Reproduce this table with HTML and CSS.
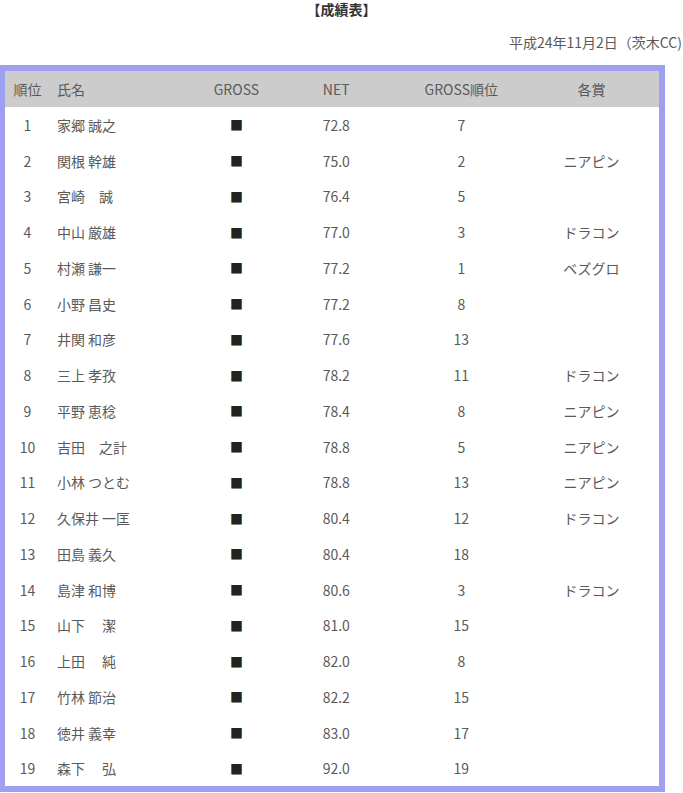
FILE: index.html
```html
<!DOCTYPE html>
<html lang="ja">
<head>
<meta charset="utf-8">
<title>成績表</title>
<link rel="stylesheet" href="styles.css">
</head>
<body>
<h1 class="title">【成績表】</h1>
<p class="date">平成24年11月2日（茨木CC)</p>
<table class="score">
  <colgroup>
    <col class="c-rank"><col class="c-name"><col class="c-gross"><col class="c-net"><col class="c-grank"><col class="c-prize">
  </colgroup>
  <thead>
    <tr><th>順位</th><th class="left">氏名</th><th>GROSS</th><th>NET</th><th>GROSS順位</th><th>各賞</th></tr>
  </thead>
  <tbody>
    <tr><td>1</td><td class="left">家郷 誠之</td><td class="sq">■</td><td>72.8</td><td>7</td><td></td></tr>
    <tr><td>2</td><td class="left">関根 幹雄</td><td class="sq">■</td><td>75.0</td><td>2</td><td>ニアピン</td></tr>
    <tr><td>3</td><td class="left">宮崎　誠</td><td class="sq">■</td><td>76.4</td><td>5</td><td></td></tr>
    <tr><td>4</td><td class="left">中山 厳雄</td><td class="sq">■</td><td>77.0</td><td>3</td><td>ドラコン</td></tr>
    <tr><td>5</td><td class="left">村瀬 謙一</td><td class="sq">■</td><td>77.2</td><td>1</td><td>ベズグロ</td></tr>
    <tr><td>6</td><td class="left">小野 昌史</td><td class="sq">■</td><td>77.2</td><td>8</td><td></td></tr>
    <tr><td>7</td><td class="left">井関 和彦</td><td class="sq">■</td><td>77.6</td><td>13</td><td></td></tr>
    <tr><td>8</td><td class="left">三上 孝孜</td><td class="sq">■</td><td>78.2</td><td>11</td><td>ドラコン</td></tr>
    <tr><td>9</td><td class="left">平野 恵稔</td><td class="sq">■</td><td>78.4</td><td>8</td><td>ニアピン</td></tr>
    <tr><td>10</td><td class="left">吉田　之計</td><td class="sq">■</td><td>78.8</td><td>5</td><td>ニアピン</td></tr>
    <tr><td>11</td><td class="left">小林 つとむ</td><td class="sq">■</td><td>78.8</td><td>13</td><td>ニアピン</td></tr>
    <tr><td>12</td><td class="left">久保井 一匡</td><td class="sq">■</td><td>80.4</td><td>12</td><td>ドラコン</td></tr>
    <tr><td>13</td><td class="left">田島 義久</td><td class="sq">■</td><td>80.4</td><td>18</td><td></td></tr>
    <tr><td>14</td><td class="left">島津 和博</td><td class="sq">■</td><td>80.6</td><td>3</td><td>ドラコン</td></tr>
    <tr><td>15</td><td class="left">山下　 潔</td><td class="sq">■</td><td>81.0</td><td>15</td><td></td></tr>
    <tr><td>16</td><td class="left">上田　 純</td><td class="sq">■</td><td>82.0</td><td>8</td><td></td></tr>
    <tr><td>17</td><td class="left">竹林 節治</td><td class="sq">■</td><td>82.2</td><td>15</td><td></td></tr>
    <tr><td>18</td><td class="left">徳井 義幸</td><td class="sq">■</td><td>83.0</td><td>17</td><td></td></tr>
    <tr><td>19</td><td class="left">森下　 弘</td><td class="sq">■</td><td>92.0</td><td>19</td><td></td></tr>
  </tbody>
</table>
</body>
</html>
```

FILE: styles.css
```css
html, body {
  margin: 0;
  padding: 0;
  background: #ffffff;
}
body {
  font-family: "Noto Sans CJK JP", "Noto Sans", sans-serif;
  font-size: 14px;
  color: #5a5a5a;
  white-space: nowrap;
}
.title {
  margin: 0;
  height: 19px;
  line-height: 19px;
  font-size: 14px;
  font-weight: bold;
  text-align: center;
  color: #333333;
}
.date {
  margin: 13px 0 0;
  height: 20px;
  line-height: 20px;
  text-align: right;
  padding-right: 1px;
}
.score {
  margin-top: 13px;
  width: 665px;
  border-collapse: collapse;
  border: 6px solid #9f9ff2;
  border-left-width: 5px;
  table-layout: fixed;
}
.c-rank { width: 47px; }
.c-name { width: 148px; }
.c-gross { width: 74px; }
.c-net { width: 124px; }
.c-grank { width: 124px; }
.c-prize { width: 137px; }
.score th {
  background: #cccccc;
  font-weight: normal;
  height: 36px;
  padding: 0;
  text-align: center;
}
.score td {
  height: 35.75px;
  padding: 0;
  text-align: center;
}
.score .left {
  text-align: left;
  padding-left: 7px;
}
.score td.sq {
  color: #222222;
  font-size: 13px;
}
```
